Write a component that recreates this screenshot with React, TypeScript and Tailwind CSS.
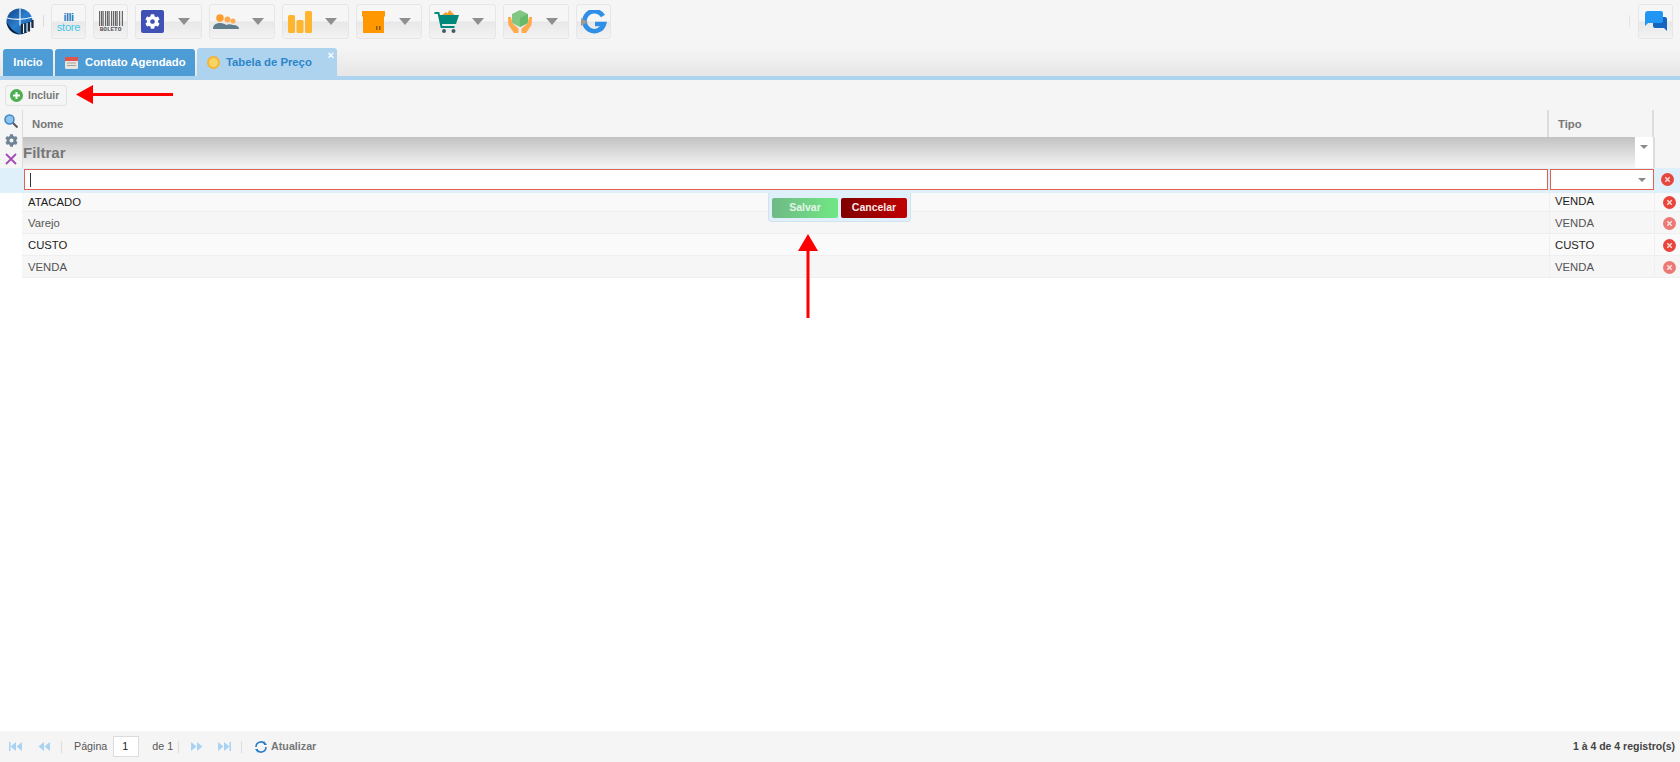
import { FaCog } from "react-icons/fa";

const rows = [
  { nome: "ATACADO", tipo: "VENDA", dark: true, h: "h-[19px]", bg: "bg-[#f9f9f9]", pt: "", lead: "leading-[17px]" },
  { nome: "Varejo", tipo: "VENDA", dark: false, h: "h-[22px]", bg: "bg-[#f6f6f6]", pt: "pt-px", lead: "leading-[20px]" },
  { nome: "CUSTO", tipo: "CUSTO", dark: true, h: "h-[22px]", bg: "bg-[#fafafa]", pt: "pt-px", lead: "leading-[21px]" },
  { nome: "VENDA", tipo: "VENDA", dark: false, h: "h-[22px]", bg: "bg-[#f6f6f6]", pt: "pt-px", lead: "leading-[20px]" },
];

function Caret() {
  return <span className="h-0 w-0 border-x-[6px] border-t-[7px] border-x-transparent border-t-[#8f8f8f]" />;
}

function SmallCaret() {
  return <span className="h-0 w-0 border-x-[4px] border-t-[4px] border-x-transparent border-t-[#8a8a8a]" />;
}

function ToolButton({ children, caret = false, wide = "w-[35px]", ml = "ml-[7px]" }: { children: React.ReactNode; caret?: boolean; wide?: string; ml?: string }) {
  return (
    <div className={`${wide} ${ml} flex h-[35px] shrink-0 items-center rounded-[3px] border border-[#e6e6e6] bg-[linear-gradient(#f6f6f6_0%,#f6f6f6_48%,#e8e8e8_52%,#f3f3f3_100%)]`}>
      <div className="flex h-full w-[33px] shrink-0 items-center justify-center">{children}</div>
      {caret && (
        <div className="ml-[9px] flex items-center">
          <Caret />
        </div>
      )}
    </div>
  );
}

function Logo() {
  return (
    <svg width="30" height="27" viewBox="0 0 30 27">
      <defs>
        <linearGradient id="globe" x1="0" y1="0" x2="1" y2="1">
          <stop offset="0" stopColor="#0f3f80" />
          <stop offset="0.5" stopColor="#2a7fd0" />
          <stop offset="1" stopColor="#14508f" />
        </linearGradient>
      </defs>
      <circle cx="14.500" cy="13.500" r="13" fill="url(#globe)" />
      <path d="M15 0.500v17M2 10c8 2 16 2 26-1" stroke="#eef4fa" strokeWidth="1.200" fill="none" />
      <path d="M1.500 14c1 7 7 12 13 12.500-6-3-10-7-13-12.500z" fill="#10151f" />
      <path d="M17 16v10M20.500 15v10M24 14v9.500M27.500 12v8" stroke="#1b2a3f" strokeWidth="2.200" />
      <path d="M18.500 16v9M22 15v9M25.700 14v8" stroke="#f2f5f8" strokeWidth="1" />
    </svg>
  );
}

function StoreIcon() {
  return (
    <div className="flex flex-col items-center font-['Liberation_Sans',sans-serif] leading-none">
      <span className="text-[11px] font-bold leading-[10px] tracking-[-0.5px] text-[#2a7fc4]">illi</span>
      <span className="text-[11px] leading-[10px] tracking-[-0.2px] text-[#43c4e8]">store</span>
    </div>
  );
}

function BoletoIcon() {
  const bars = [0, 2, 3.5, 6, 8, 9.5, 12, 14, 16, 17.5, 20, 22.8];
  return (
    <div className="flex w-[25px] flex-col items-center">
      <svg width="24" height="15" viewBox="0 0 24 15" className="block">
        {bars.map((x) => (
          <rect key={x} x={x} y="0" width="1.200" height="15" fill="#666" />
        ))}
      </svg>
      <span className="mt-px font-['Liberation_Mono',monospace] text-[6px] font-bold leading-[6px] text-[#555]">BOLETO</span>
    </div>
  );
}

function GearIcon() {
  return (
    <div className="flex h-[23px] w-[23px] items-center justify-center rounded-[2px] bg-[#3f51b5] text-white">
      <FaCog size={15} />
    </div>
  );
}

function PeopleIcon() {
  return (
    <svg width="26" height="16" viewBox="0 0 26 16">
      <circle cx="7" cy="4" r="3.800" fill="#ff9d2e" />
      <circle cx="14.500" cy="5.500" r="3" fill="#ffa94d" />
      <circle cx="20" cy="7" r="2.500" fill="#ffa94d" />
      <path d="M0 15c0-4 3-6 7-6 3 0 5 1 6 2 2-1 5-1 7 0 3 0 6 1 6 4z" fill="#607d8b" />
    </svg>
  );
}

function ChartIcon() {
  return (
    <svg width="24" height="22" viewBox="0 0 24 22">
      <rect x="0" y="4" width="7" height="18" rx="1.500" fill="#ffb52e" />
      <rect x="8.500" y="9" width="7" height="13" rx="1.500" fill="#ffb52e" />
      <rect x="17" y="0" width="7" height="22" rx="1.500" fill="#ffb52e" />
    </svg>
  );
}

function BoxIcon() {
  return (
    <svg width="23" height="22" viewBox="0 0 23 22">
      <rect x="0" y="0" width="23" height="5.500" fill="#ff9800" />
      <rect x="1" y="5" width="21" height="17" fill="#ff9800" />
      <rect x="14" y="15" width="1.500" height="4" fill="#8a5a10" />
      <rect x="17" y="15" width="1.500" height="4" fill="#8a5a10" />
    </svg>
  );
}

function CartIcon() {
  return (
    <svg width="25" height="24" viewBox="0 0 25 24">
      <path d="M8 5l4-3 1.500 1.500L15.500 0l5 5z" fill="#f39c2a" />
      <path d="M0.500 3h4l3 14h13" stroke="#00897b" strokeWidth="2" fill="none" />
      <path d="M5 5h20l-3 9H7z" fill="#00897b" />
      <circle cx="10" cy="21" r="2" fill="#455a64" />
      <circle cx="19.500" cy="21" r="2" fill="#455a64" />
    </svg>
  );
}

function HandsIcon() {
  return (
    <svg width="24" height="23" viewBox="0 0 24 23">
      <path d="M12 0l8 4v9l-8 4-8-4V4z" fill="#81c784" />
      <path d="M12 8l8-4v9l-8 4z" fill="#66bb6a" />
      <path d="M0 7h3l1.500 6.500 6 5V23h-4.500L0.500 15z" fill="#ffa94d" />
      <path d="M24 7h-3l-1.500 6.500-6 5V23H18l5.500-8z" fill="#ffa94d" />
    </svg>
  );
}

function GoogleLike() {
  return (
    <svg width="26" height="24" viewBox="0 0 26 24">
      <path d="M22 6A10 10 0 1 0 23 14H14" stroke="#2f8fe6" strokeWidth="4.500" fill="none" />
      <path d="M0 8l7 4-7 4z" fill="#9a9a9a" />
    </svg>
  );
}

function ChatIcon() {
  return (
    <svg width="22" height="22" viewBox="0 0 22 22">
      <path d="M8 6h12a2 2 0 0 1 2 2v12l-3-3H10a2 2 0 0 1-2-2z" fill="#1565c0" />
      <path d="M3 0h13a2 2 0 0 1 2 2v8a2 2 0 0 1-2 2H3l-3 3V3a3 3 0 0 1 3-3z" fill="#2196f3" />
    </svg>
  );
}

function RemoveDot({ faded }: { faded: boolean }) {
  return (
    <svg width="13" height="13" viewBox="0 0 13 13" className={faded ? "opacity-70" : ""}>
      <circle cx="6.500" cy="6.500" r="6.500" fill="#e8453c" />
      <path d="M4.300 4.300l4.400 4.400M8.700 4.300l-4.400 4.400" stroke="#f8dcdc" strokeWidth="1.500" />
    </svg>
  );
}

function PagerArrows({ flip = false, bar = false }: { flip?: boolean; bar?: boolean }) {
  return (
    <svg width="13" height="9" viewBox="0 0 13 9" className={flip ? "rotate-180" : ""}>
      {bar && <rect x="0" y="0" width="1.500" height="9" fill="#a8d4f2" />}
      <path d="M7 0v9L1.500 4.500zM13 0v9L7.500 4.500z" fill="#a8d4f2" />
    </svg>
  );
}

export default function App() {
  return (
    <div className="relative flex h-[762px] w-[1680px] flex-col overflow-hidden bg-white font-['Liberation_Sans',sans-serif] text-[11.3px]">
      {/* top toolbar */}
      <div className="flex h-[48px] shrink-0 items-start bg-[#f5f5f5] pt-[4px]">
        <div className="ml-[5px] mt-[4px] w-[30px]">
          <Logo />
        </div>
        <div className="ml-[8px] mt-[11px] h-[12px] w-px bg-[#dcdcdc]" />
        <ToolButton ml="ml-[7px]"><StoreIcon /></ToolButton>
        <ToolButton><BoletoIcon /></ToolButton>
        <ToolButton caret wide="w-[66.5px]"><GearIcon /></ToolButton>
        <ToolButton caret wide="w-[66.5px]"><PeopleIcon /></ToolButton>
        <ToolButton caret wide="w-[66.5px]"><ChartIcon /></ToolButton>
        <ToolButton caret wide="w-[66.5px]"><BoxIcon /></ToolButton>
        <ToolButton caret wide="w-[66.5px]"><CartIcon /></ToolButton>
        <ToolButton caret wide="w-[66.5px]"><HandsIcon /></ToolButton>
        <ToolButton><GoogleLike /></ToolButton>
        <div className="ml-auto mt-[11px] h-[12px] w-px bg-[#e4e4e4]" />
        <ToolButton ml="ml-[8px] mr-[7px]"><ChatIcon /></ToolButton>
      </div>

      {/* tabs */}
      <div className="flex h-[28px] shrink-0 items-end bg-[linear-gradient(#f5f5f5,#e6e6e6)] pl-[3px]">
        <div className="flex h-[27px] w-[50px] items-center justify-center rounded-t-[3px] bg-[#4d9cd6] font-bold text-white">Início</div>
        <div className="ml-[2px] flex h-[27px] w-[140px] items-center rounded-t-[3px] bg-[#4d9cd6] pl-[10px] font-bold text-white">
          <svg width="13" height="13" viewBox="0 0 13 13">
            <rect x="0" y="1" width="13" height="12" rx="1" fill="#e8e4e0" />
            <rect x="0" y="1" width="13" height="4" fill="#e0544c" />
            <path d="M2 7h9M2 9.500h9" stroke="#a9a09a" strokeWidth="1" />
          </svg>
          <span className="ml-[7px]">Contato Agendado</span>
        </div>
        <div className="relative ml-[2px] flex h-[28px] w-[140px] items-center rounded-t-[3px] bg-[#aed3ef] pl-[10px] font-bold text-[#2b86c9]">
          <span className="flex h-[13px] w-[13px] items-center justify-center rounded-full border-2 border-[#f5b52e] bg-[#f8d466]" />
          <span className="ml-[6px]">Tabela de Preço</span>
          <span className="absolute right-[3px] top-0 text-[11px] leading-[14px] text-white">×</span>
        </div>
      </div>
      <div className="h-[4px] shrink-0 bg-[#aed3ef]" />

      {/* actions */}
      <div className="h-[30px] shrink-0 bg-[#f5f5f5] pl-[5px] pt-[5px]">
        <div className="flex h-[21px] w-[62px] items-center rounded-[3px] border border-[#e2e2e2] bg-[#f5f5f5] pl-[4px] font-bold text-[#777]">
          <svg width="13" height="13" viewBox="0 0 13 13">
            <circle cx="6.500" cy="6.500" r="6.500" fill="#4caf50" />
            <path d="M6.500 3v7M3 6.500h7" stroke="#fff" strokeWidth="2" />
          </svg>
          <span className="ml-[5px] text-[10.4px]">Incluir</span>
        </div>
      </div>

      {/* grid */}
      <div className="flex shrink-0">
        <div className="flex w-[22px] shrink-0 flex-col">
          <div className="flex h-[58px] flex-col items-center bg-[#f5f5f5] pt-[4px]">
            <svg width="14" height="14" viewBox="0 0 14 14">
              <circle cx="5.500" cy="5.500" r="4.500" fill="#8fc4ee" stroke="#3f88c5" strokeWidth="1.500" />
              <path d="M9 9l4.500 4.500" stroke="#556" strokeWidth="2" />
            </svg>
            <span className="mt-[6px] text-[#6f8296]"><FaCog size={13} /></span>
            <svg width="12" height="12" viewBox="0 0 12 12" className="mt-[6px]">
              <path d="M1 1l10 10M11 1L1 11" stroke="#a24bb5" strokeWidth="1.800" />
            </svg>
          </div>
          <div className="h-[25px] bg-[#e0f0fb]" />
        </div>
        <div className="min-w-0 flex-1">
          {/* header */}
          <div className="flex h-[27px] bg-[#f5f5f5] font-bold text-[#777]">
            <div className="flex flex-1 items-center border-l border-r-2 border-[#dcdcdc] pl-[9px] pt-px">Nome</div>
            <div className="flex w-[105px] items-center border-r-2 border-[#dcdcdc] pl-[9px] pt-px">Tipo</div>
            <div className="w-[26px]" />
          </div>
          {/* filter title */}
          <div className="flex h-[31px] bg-[#f5f5f5]">
            <div className="flex flex-1 items-center border-l border-[#dcdcdc] bg-[linear-gradient(#c2c2c2,#f5f5f5)] pt-[2px] text-[15px] font-bold text-[#777]">Filtrar</div>
            <div className="flex w-[18px] justify-center bg-white pt-[8px]"><SmallCaret /></div>
            <div className="w-[2px] bg-[#dcdcdc]" />
            <div className="w-[25px]" />
          </div>
          {/* filter inputs */}
          <div className="flex h-[25px] items-start bg-[#e0f0fb] pt-px">
            <div className="ml-[2px] flex h-[21px] flex-1 items-center border border-[#e2604f] bg-white pl-[5px]">
              <span className="h-[14px] w-px bg-[#333]" />
            </div>
            <div className="ml-[2px] flex h-[21px] w-[104px] items-center justify-end border border-[#e2604f] bg-white pr-[7px]"><SmallCaret /></div>
            <div className="flex h-[21px] w-[26px] items-center justify-center"><RemoveDot faded={false} /></div>
          </div>
          {/* rows */}
          {rows.map((r) => (
            <div key={r.nome} className={`flex items-center border-b border-[#efefef] ${r.h} ${r.bg} ${r.pt} ${r.dark ? "text-[#1c1c1c]" : "text-[#555]"}`}>
              <div className="flex-1 pl-[6px]">{r.nome}</div>
              <div className={`h-full w-[105px] border-l border-[#efefef] pl-[5px] ${r.lead}`}>{r.tipo}</div>
              <div className="flex h-full w-[26px] items-center justify-center border-l border-[#efefef] pl-[3px]"><RemoveDot faded={!r.dark} /></div>
            </div>
          ))}
        </div>
      </div>

      <div className="flex-1" />

      {/* pager */}
      <div className="flex h-[31px] shrink-0 items-center bg-[#f5f5f5] pl-[9px] pr-[5px] text-[10.7px] text-[#555]">
        <PagerArrows bar />
        <span className="ml-[15px]"><PagerArrows /></span>
        <span className="ml-[11px] h-[12px] w-px bg-[#dedede]" />
        <span className="ml-[12px]">Página</span>
        <span className="ml-[6px] flex h-[21px] w-[26px] items-center border border-[#dcdcdc] bg-white pl-[8px] text-[#222]">1</span>
        <span className="ml-[13px]">de 1</span>
        <span className="ml-[5px] h-[12px] w-px bg-[#dedede]" />
        <span className="ml-[12px]"><PagerArrows flip /></span>
        <span className="ml-[14px]"><PagerArrows flip bar /></span>
        <span className="ml-[10px] h-[12px] w-px bg-[#dedede]" />
        <svg width="14" height="14" viewBox="0 0 14 14" className="ml-[12px]">
          <path d="M2 7a5 5 0 0 1 9-3M12 7a5 5 0 0 1-9 3" stroke="#2b7fc9" strokeWidth="1.600" fill="none" />
          <path d="M10 1v4h3zM4 13V9H1z" fill="#2b7fc9" />
        </svg>
        <span className="ml-[3px] font-bold text-[#777]">Atualizar</span>
        <span className="ml-auto text-[10.5px] font-bold text-[#444]">1 à 4 de 4 registro(s)</span>
      </div>

      {/* row editor popup */}
      <div className="absolute left-[768px] top-[193px] flex h-[29px] w-[143px] items-start gap-[3px] rounded-b-[4px] border border-t-0 border-[#d4e2ec] bg-[#e0f0fb] pl-[3px] pt-[5px] text-[10.5px] font-bold">
        <div className="flex h-[20px] w-[66px] items-center justify-center rounded-[2px] bg-[linear-gradient(90deg,#6fb985,#70e884)] text-[#e4f5e8]">Salvar</div>
        <div className="flex h-[20px] w-[66px] items-center justify-center rounded-[2px] bg-[linear-gradient(90deg,#800000,#c00000)] text-[#fbe8e8]">Cancelar</div>
      </div>

      {/* annotation arrows */}
      <svg width="100" height="20" viewBox="0 0 100 20" className="absolute left-[75px] top-[85px]">
        <path d="M1 9.500L18 0v8h80v3H18v8z" fill="#ff0000" />
      </svg>
      <svg width="20" height="86" viewBox="0 0 20 86" className="absolute left-[798px] top-[233px]">
        <path d="M10 1L20 18h-8.500v67h-3V18H0z" fill="#ff0000" />
      </svg>
    </div>
  );
}
